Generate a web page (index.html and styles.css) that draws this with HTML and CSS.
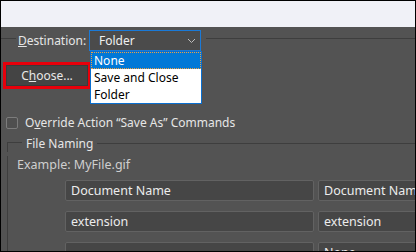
FILE: index.html
```html
<!DOCTYPE html>
<html lang="en">
<head>
    <meta charset="UTF-8">
    <title>Batch</title>
    <link rel="stylesheet" href="styles.css">
</head>
<body>
    <div class="window">
        <div class="titlebar"></div>
        <div class="panel">

            <div class="dest-row">
                <span class="rule short"></span>
                <label class="label"><u>D</u>estination:</label>
                <div class="select-wrap">
                    <div class="select">
                        <span>Folder</span>
                        <svg width="9" height="6" viewBox="0 0 9 6"><path d="M1 1 L4.5 4.5 L8 1" fill="none" stroke="#bdbdbd" stroke-width="1"/></svg>
                    </div>
                    <ul class="options">
                        <li class="selected">None</li>
                        <li>Save and Close</li>
                        <li>Folder</li>
                    </ul>
                </div>
                <span class="rule"></span>
            </div>

            <div class="choose-row">
                <div class="highlight">
                    <button class="btn">C<u>h</u>oose...</button>
                </div>
            </div>

            <div class="check-row">
                <span class="checkbox"></span>
                <span class="label">O<u>v</u>erride Action “Save As” Commands</span>
            </div>

            <div class="group-head">
                <span class="corner"></span>
                <span class="label">File Naming</span>
                <span class="rule"></span>
            </div>
            <div class="group-body">
                <div class="example">Example: MyFile.gif</div>
                <div class="fields">
                    <div class="field">Document Name</div>
                    <div class="field">Document Name</div>
                    <div class="field">extension</div>
                    <div class="field">extension</div>
                    <div class="field"></div>
                    <div class="field">None</div>
                </div>
            </div>

        </div>
    </div>
</body>
</html>
```

FILE: styles.css
```css
body {
    margin: 0;
    padding: 0;
    font-family: "Noto Sans", "Open Sans", sans-serif;
    font-size: 12px;
}

.window {
    width: 416px;
    height: 252px;
    box-sizing: border-box;
    border: 1px solid #000;
    overflow: hidden;
    display: flex;
    flex-direction: column;
}

.titlebar {
    height: 26px;
    flex-shrink: 0;
    background-color: #f0f1f7;
}

.panel {
    flex-grow: 1;
    background-color: #535353;
    color: #e6e6e6;
    overflow: hidden;
}

.rule {
    flex-grow: 1;
    height: 1px;
    background-color: #3e3e3e;
}

.label {
    white-space: nowrap;
    line-height: 17px;
}

/* destination */
.dest-row {
    display: flex;
    align-items: center;
    margin-top: 3px;
    height: 21px;
}

.dest-row .rule {
    align-self: flex-start;
    margin-top: 8px;
}

.dest-row .rule.short {
    flex-grow: 0;
    width: 15px;
    margin-right: 2px;
}

.dest-row .label {
    width: 71px;
}

.select-wrap {
    position: relative;
    margin-right: 5px;
}

.select {
    width: 112px;
    height: 21px;
    box-sizing: border-box;
    border: 1px solid #1a7ad8;
    background-color: #4b4b4b;
    display: flex;
    align-items: center;
    justify-content: space-between;
    padding: 0 4px 0 9px;
    color: #f0f0f0;
}

.options {
    position: absolute;
    top: 21px;
    left: 1px;
    width: 112px;
    box-sizing: border-box;
    margin: 0;
    padding: 0;
    list-style: none;
    background-color: #fff;
    border: 1px solid #0a6fd0;
    color: #000;
    z-index: 2;
}

.options li {
    height: 17px;
    line-height: 17px;
    padding-left: 3px;
    box-sizing: border-box;
}

.options li.selected {
    background-color: #0078d7;
    color: #fff;
    outline: 1px dotted #f0a040;
    outline-offset: -1px;
}

/* choose */
.choose-row {
    margin-top: 11px;
    display: flex;
}

.highlight {
    margin-left: 2px;
    border: 3px solid #e8000b;
}

.btn {
    display: block;
    width: 82px;
    height: 21px;
    margin: 0;
    padding: 0;
    border: 1px solid #3a3a3a;
    background-color: #444;
    color: #e8e8e8;
    font-family: inherit;
    font-size: 12px;
}

/* checkbox */
.check-row {
    margin-top: 25px;
    height: 17px;
    display: flex;
    align-items: center;
    gap: 7px;
    padding-left: 5px;
}

.checkbox {
    width: 12px;
    height: 12px;
    box-sizing: border-box;
    border: 1px solid #7c7c7c;
    border-radius: 2px;
    background-color: #4f4f4f;
}

/* file naming */
.group-head {
    margin-top: 4px;
    margin-left: 6px;
    height: 17px;
    display: flex;
    align-items: center;
}

.corner {
    align-self: flex-end;
    width: 14px;
    height: 9px;
    border-top: 1px solid #3e3e3e;
    border-left: 1px solid #3e3e3e;
    margin-right: 4px;
}

.group-head .rule {
    margin-left: 4px;
}

.group-body {
    margin-left: 6px;
    border-left: 1px solid #3e3e3e;
    padding-left: 9px;
    height: 120px;
}

.example {
    margin-top: 4px;
    line-height: 17px;
    font-size: 12.5px;
    color: #cfcfcf;
}

.fields {
    margin-top: 7px;
    margin-left: 48px;
    display: grid;
    grid-template-columns: 249px 249px;
    grid-auto-rows: 21px;
    column-gap: 4px;
    row-gap: 10px;
}

.field {
    box-sizing: border-box;
    border: 1px solid #626262;
    border-radius: 2px;
    background-color: #464646;
    padding-left: 5px;
    line-height: 19px;
    font-size: 12.5px;
    color: #ececec;
    white-space: nowrap;
    overflow: hidden;
}
```
